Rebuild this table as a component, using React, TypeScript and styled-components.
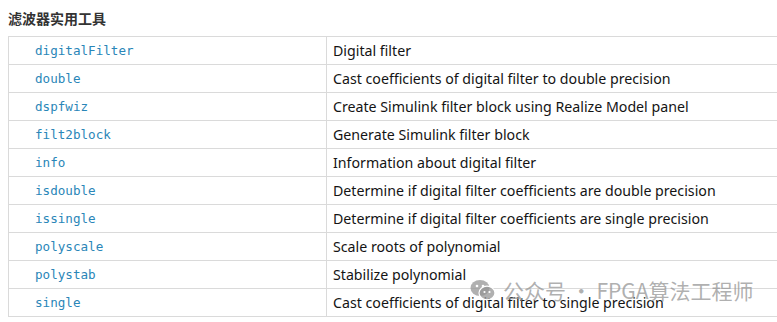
import React from "react";
import styled, { createGlobalStyle } from "styled-components";

const GlobalStyle = createGlobalStyle`
  html, body {
    margin: 0;
    padding: 0;
    background: #ffffff;
    overflow: hidden;
  }
`;

const Page = styled.div`
  position: relative;
  width: 777px;
  height: 322px;
  padding: 9px 0 0 8px;
  box-sizing: border-box;
  overflow: hidden;
  font-family: "Noto Sans", "Noto Sans CJK SC", sans-serif;
`;

const Title = styled.h3`
  margin: 0 0 9px 0;
  font-family: "Noto Sans CJK SC", "Noto Sans", sans-serif;
  font-size: 14px;
  line-height: 18px;
  font-weight: 700;
  color: #333333;
`;

const Table = styled.table`
  width: 790px;
  border-collapse: collapse;
  table-layout: fixed;
`;

const Row = styled.tr`
  height: 28px;
`;

const NameCell = styled.td`
  width: 318px;
  box-sizing: border-box;
  padding: 0 0 0 26px;
  border: 1px solid #dadada;
  font-family: "DejaVu Sans Mono", "Liberation Mono", monospace;
  font-size: 12.6px;
  color: #2a86b8;
  vertical-align: middle;
`;

const DescCell = styled.td`
  padding: 0 0 0 6px;
  border: 1px solid #dadada;
  font-size: 14.2px;
  color: #141414;
  vertical-align: middle;
`;

const Watermark = styled.div`
  position: absolute;
  left: 470px;
  top: 275px;
  display: flex;
  align-items: center;
  gap: 7px;
  font-family: "Noto Sans CJK SC", "Noto Sans", sans-serif;
  font-size: 21px;
  color: rgba(150, 150, 150, 0.75);
  white-space: nowrap;
  pointer-events: none;
`;

const rows: [string, string][] = [
  ["digitalFilter", "Digital filter"],
  ["double", "Cast coefficients of digital filter to double precision"],
  ["dspfwiz", "Create Simulink filter block using Realize Model panel"],
  ["filt2block", "Generate Simulink filter block"],
  ["info", "Information about digital filter"],
  ["isdouble", "Determine if digital filter coefficients are double precision"],
  ["issingle", "Determine if digital filter coefficients are single precision"],
  ["polyscale", "Scale roots of polynomial"],
  ["polystab", "Stabilize polynomial"],
  ["single", "Cast coefficients of digital filter to single precision"],
];

const WeChatIcon = () => (
  <svg width="26" height="22" viewBox="0 0 26 22">
    <ellipse cx="10" cy="9" rx="9.5" ry="8" fill="rgba(150,150,150,0.75)" />
    <ellipse cx="17" cy="14" rx="8" ry="6.8" fill="rgba(150,150,150,0.75)" stroke="#fff" strokeWidth="1.2" />
    <circle cx="7" cy="7" r="1.3" fill="#fff" />
    <circle cx="13" cy="7" r="1.3" fill="#fff" />
    <circle cx="14.5" cy="13" r="1.1" fill="#fff" />
    <circle cx="19.5" cy="13" r="1.1" fill="#fff" />
  </svg>
);

const App = () => (
  <Page>
    <GlobalStyle />
    <Title>滤波器实用工具</Title>
    <Table>
      <tbody>
        {rows.map(([name, desc]) => (
          <Row key={name}>
            <NameCell>{name}</NameCell>
            <DescCell>{desc}</DescCell>
          </Row>
        ))}
      </tbody>
    </Table>
    <Watermark>
      <WeChatIcon />
      <span>公众号 · FPGA算法工程师</span>
    </Watermark>
  </Page>
);

export default App;
